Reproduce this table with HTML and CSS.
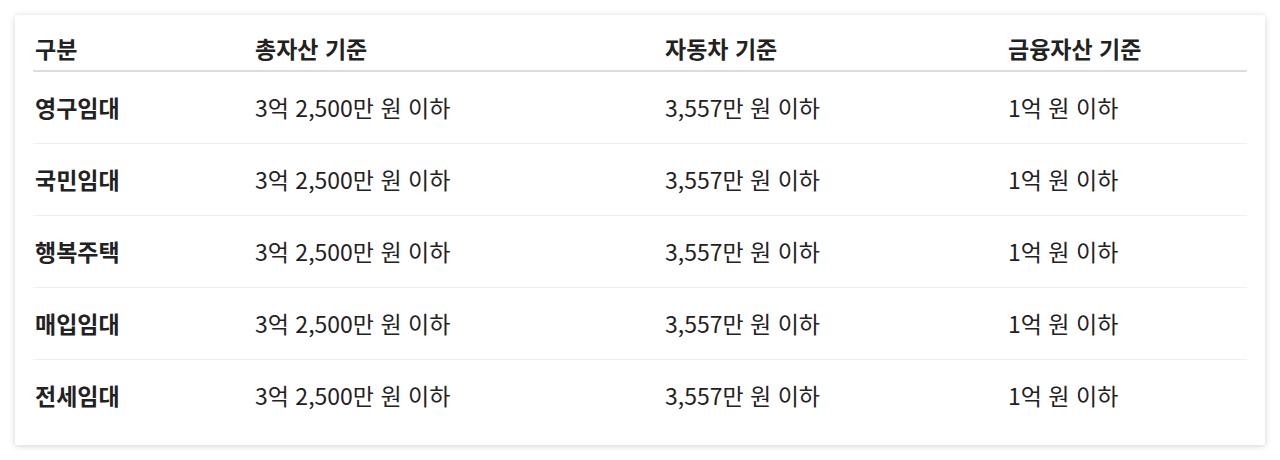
FILE: index.html
```html
<!DOCTYPE html>
<html lang="ko">
<head>
<meta charset="utf-8">
<link rel="stylesheet" href="styles.css">
</head>
<body>
<div class="card">
  <table class="criteria">
    <colgroup>
      <col class="c1"><col class="c2"><col class="c3"><col class="c4">
    </colgroup>
    <thead>
      <tr><th>구분</th><th>총자산 기준</th><th>자동차 기준</th><th>금융자산 기준</th></tr>
    </thead>
    <tbody>
      <tr><td class="type">영구임대</td><td>3억 2,500만 원 이하</td><td>3,557만 원 이하</td><td>1억 원 이하</td></tr>
      <tr><td class="type">국민임대</td><td>3억 2,500만 원 이하</td><td>3,557만 원 이하</td><td>1억 원 이하</td></tr>
      <tr><td class="type">행복주택</td><td>3억 2,500만 원 이하</td><td>3,557만 원 이하</td><td>1억 원 이하</td></tr>
      <tr><td class="type">매입임대</td><td>3억 2,500만 원 이하</td><td>3,557만 원 이하</td><td>1억 원 이하</td></tr>
      <tr><td class="type">전세임대</td><td>3억 2,500만 원 이하</td><td>3,557만 원 이하</td><td>1억 원 이하</td></tr>
    </tbody>
  </table>
</div>
</body>
</html>
```
FILE: styles.css
```css
html, body {
  margin: 0;
  background: #fff;
}
body {
  padding: 15px;
  font-family: "Noto Sans CJK KR", "Noto Sans", sans-serif;
  color: #222;
}
.card {
  background: #fff;
  border-radius: 3px;
  box-shadow: 0 1px 6px rgba(0, 0, 0, 0.18);
  padding: 18px 18px 14px;
}
.criteria {
  width: 100%;
  border-collapse: collapse;
  table-layout: fixed;
  font-size: 23px;
}
.c1 { width: 220px; }
.c2 { width: 410px; }
.c3 { width: 343px; }
.criteria th,
.criteria td {
  text-align: left;
  padding: 0 0 0 2px;
  line-height: 1;
  vertical-align: middle;
}
.criteria th {
  font-weight: 700;
  height: 30px;
  padding-bottom: 7px;
  border-bottom: 2px solid #ddd;
}
.criteria td {
  height: 71px;
  font-weight: 400;
  border-bottom: 1px solid #eee;
}
.criteria tbody tr:last-child td {
  border-bottom: none;
}
.criteria td.type {
  font-weight: 700;
}
```
